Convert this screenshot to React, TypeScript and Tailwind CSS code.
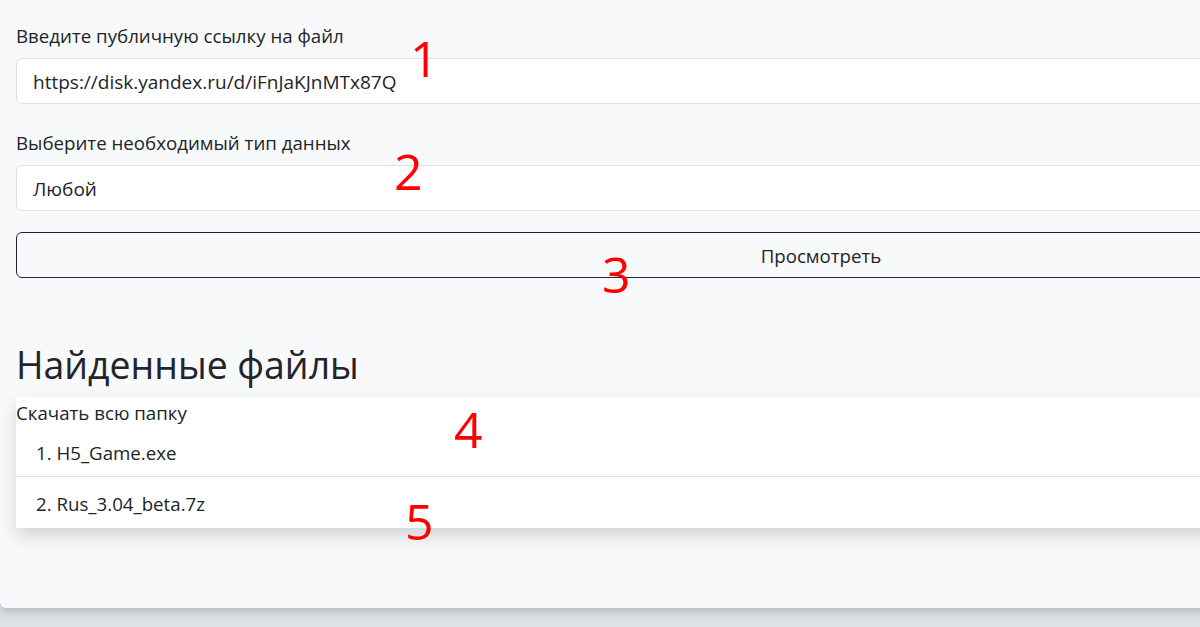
import React from "react";

const font = { fontFamily: '"Open Sans", "Noto Sans", sans-serif' };

const Mark: React.FC<{ n: string; className: string }> = ({ n, className }) => (
  <span
    className={`absolute text-[50px] leading-none text-[#ff0000] pointer-events-none ${className}`}
  >
    {n}
  </span>
);

const Field: React.FC<{ label: string; value: string }> = ({ label, value }) => (
  <div className="flex flex-col gap-2.5">
    <label className="text-[18.7px] leading-6">{label}</label>
    <div className="h-[46px] flex items-center px-4 pt-[3px] bg-white border border-[#dee2e6] rounded-md text-[19px]">
      {value}
    </div>
  </div>
);

const App: React.FC = () => {
  return (
    <div
      className="relative w-[1200px] h-[627px] overflow-hidden bg-[#dee2e6] text-[#212529]"
      style={font}
    >
      <div className="h-[608px] w-[1660px] bg-[#f8f9fa] rounded-bl-md shadow-[0_4px_10px_rgba(0,0,0,0.18)]">
        <div className="w-[1642px] px-4 pt-6 flex flex-col">
          {/* form */}
          <div className="flex flex-col">
            <Field label="Введите публичную ссылку на файл" value="https://disk.yandex.ru/d/iFnJaKJnMTx87Q" />
            <div className="mt-[27px]">
              <Field label="Выберите необходимый тип данных" value="Любой" />
            </div>
            <button className="mt-[21px] w-full h-[46px] flex items-center justify-center pt-[3px] border border-[#212529] rounded-md text-[18.7px]">
              Просмотреть
            </button>
          </div>

          {/* results */}
          <h1 className="mt-[63px] text-[37.4px] leading-[48px] font-normal">
            Найденные файлы
          </h1>
          <div className="mt-2 bg-white shadow-[0_8px_16px_rgba(0,0,0,0.15)] flex flex-col text-[18.7px]">
            <div className="h-[30px] flex items-center pt-0.5">Скачать всю папку</div>
            <ol className="flex flex-col">
              <li className="h-[50px] flex items-center px-5 pt-[3px] border-b border-[#dee2e6]">
                1. H5_Game.exe
              </li>
              <li className="h-[51px] flex items-center px-5 pt-[3px]">
                2. Rus_3.04_beta.7z
              </li>
            </ol>
          </div>
        </div>
      </div>

      <Mark n="1" className="left-[410px] top-[33px]" />
      <Mark n="2" className="left-[394px] top-[146px]" />
      <Mark n="3" className="left-[602px] top-[249px]" />
      <Mark n="4" className="left-[454px] top-[404px]" />
      <Mark n="5" className="left-[405px] top-[496px]" />
    </div>
  );
};

export default App;
